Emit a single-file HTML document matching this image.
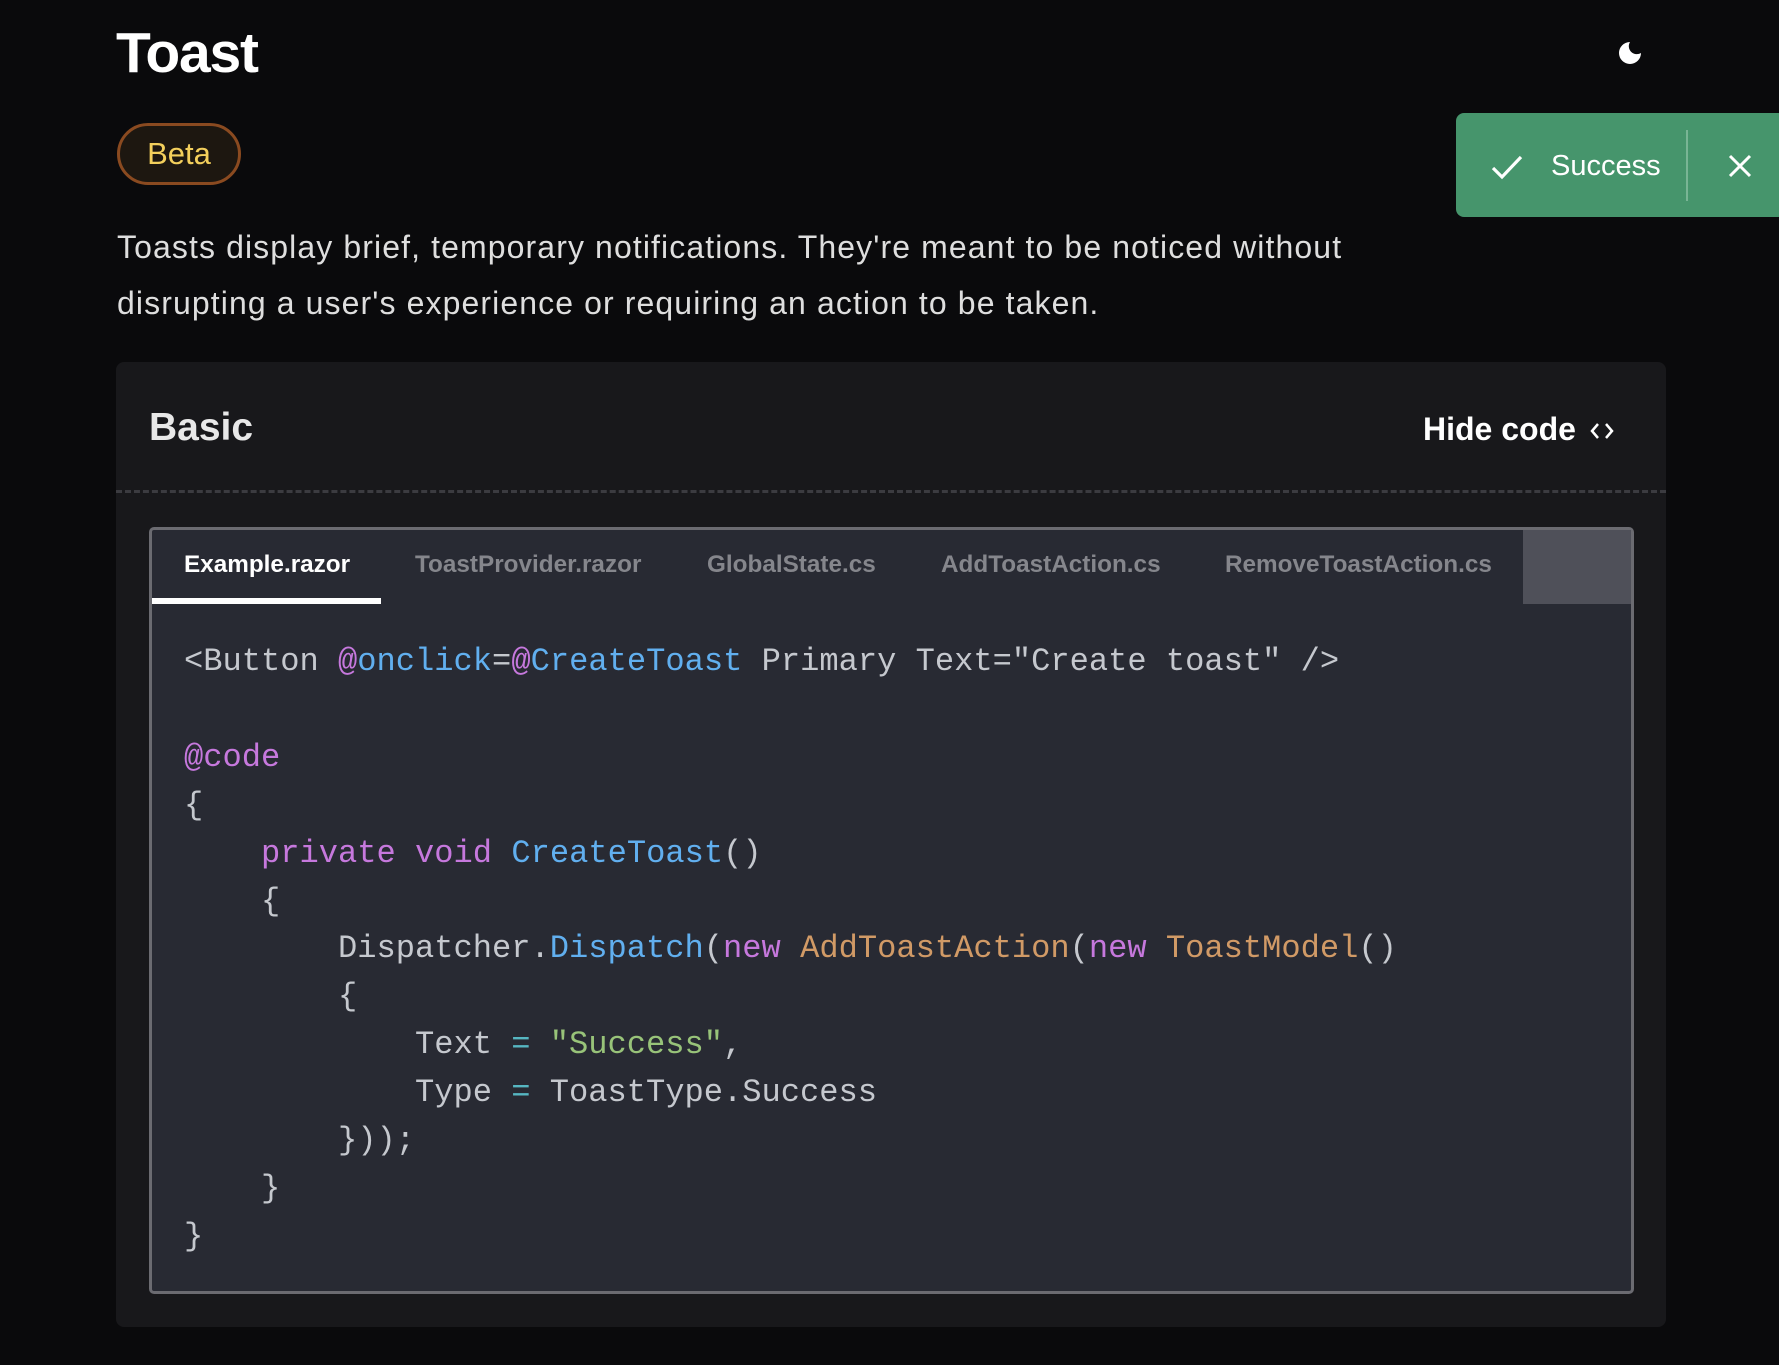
<!DOCTYPE html>
<html><head><meta charset="utf-8"><style>
*{margin:0;padding:0;box-sizing:border-box}
body{width:1779px;height:1365px;background:#0a0a0c;font-family:"Liberation Sans",sans-serif;position:relative;overflow:hidden;color:#fff}
.a{position:absolute;white-space:pre}
#title{left:116px;top:20px;font-size:57px;font-weight:bold;letter-spacing:-1.2px;color:#fff}
#beta{left:117px;top:123px;width:124px;height:62px;border:3px solid #8a4a20;border-radius:31px;background:#1d1710;color:#f3cf5c;font-size:31px;text-align:center;line-height:56px}
.p{left:117px;font-size:32px;color:#dedede;letter-spacing:1.1px}
#toast{left:1456px;top:113px;width:330px;height:104px;background:#46956c;border-radius:8px}
#card{left:116px;top:362px;width:1550px;height:965px;background:#18181b;border-radius:8px}
#dash{left:116px;top:490px;width:1550px;height:0;border-top:3px dashed #3b3b40}
#code{left:149px;top:527px;width:1485px;height:767px;border:3px solid #6b6b71;border-radius:5px;background:#282a33}
.tab{top:551px;font-size:24.3px;font-weight:bold;color:#85868c}
.c{left:184px;font-family:"Liberation Mono",monospace;font-size:32.1px;color:#c5c8ce}
.k{color:#c678dd}.b{color:#61afef}.o{color:#d19a66}.g{color:#98c379}.y{color:#56b6c2}
</style></head><body>
<div class="a" id="title">Toast</div>
<div class="a" id="beta">Beta</div>
<div class="a p" style="top:229px">Toasts display brief, temporary notifications. They're meant to be noticed without</div>
<div class="a p" style="top:285px">disrupting a user's experience or requiring an action to be taken.</div>
<svg class="a" style="left:1617px;top:40px" width="26" height="26" viewBox="0 0 26 26"><path d="M13 2 A11 11 0 1 0 24 13 A8 8 0 0 1 13 2 Z" fill="#fff"/></svg>
<div class="a" id="toast">
<svg class="a" style="left:35px;top:41px" width="32" height="26" viewBox="0 0 32 26"><path d="M2 14 L11 23 L30 3" stroke="#fff" stroke-width="3.2" fill="none"/></svg>
<div class="a" style="left:95px;top:37px;font-size:29px;color:#fff">Success</div>
<div class="a" style="left:230px;top:17px;width:2px;height:71px;background:#79b595"></div>
<svg class="a" style="left:272px;top:41px" width="24" height="24" viewBox="0 0 24 24"><path d="M2 2 L22 22 M22 2 L2 22" stroke="#fff" stroke-width="3"/></svg>
</div>
<div class="a" id="card"></div>
<div class="a" style="left:149px;top:406px;font-size:39px;font-weight:bold;color:#e8e8e8">Basic</div>
<div class="a" style="left:1423px;top:411px;font-size:32px;font-weight:bold;color:#fff">Hide code</div>
<svg class="a" style="left:1589px;top:420px" width="26" height="22" viewBox="0 0 26 22"><path d="M9 4 L3 11 L9 18 M17 4 L23 11 L17 18" stroke="#fff" stroke-width="2.5" fill="none"/></svg>
<div class="a" id="dash"></div>
<div class="a" id="code"></div>
<div class="a" style="left:1523px;top:530px;width:108px;height:74px;background:#4f5059"></div>
<div class="a tab" style="left:184px;color:#fff">Example.razor</div>
<div class="a tab" style="left:415px">ToastProvider.razor</div>
<div class="a tab" style="left:707px">GlobalState.cs</div>
<div class="a tab" style="left:941px">AddToastAction.cs</div>
<div class="a tab" style="left:1225px">RemoveToastAction.cs</div>
<div class="a" style="left:152px;top:598px;width:229px;height:6px;background:#fff"></div>
<div class="a c" style="top:643px">&lt;Button <span class="k">@</span><span class="b">onclick</span>=<span class="k">@</span><span class="b">CreateToast</span> Primary Text="Create toast" /&gt;</div>
<div class="a c" style="top:739px"><span class="k">@code</span></div>
<div class="a c" style="top:787px">{</div>
<div class="a c" style="top:835px">    <span class="k">private</span> <span class="k">void</span> <span class="b">CreateToast</span>()</div>
<div class="a c" style="top:883px">    {</div>
<div class="a c" style="top:930px">        Dispatcher.<span class="b">Dispatch</span>(<span class="k">new</span> <span class="o">AddToastAction</span>(<span class="k">new</span> <span class="o">ToastModel</span>()</div>
<div class="a c" style="top:978px">        {</div>
<div class="a c" style="top:1026px">            Text <span class="y">=</span> <span class="g">"Success"</span>,</div>
<div class="a c" style="top:1074px">            Type <span class="y">=</span> ToastType.Success</div>
<div class="a c" style="top:1122px">        }));</div>
<div class="a c" style="top:1170px">    }</div>
<div class="a c" style="top:1218px">}</div>
</body></html>
